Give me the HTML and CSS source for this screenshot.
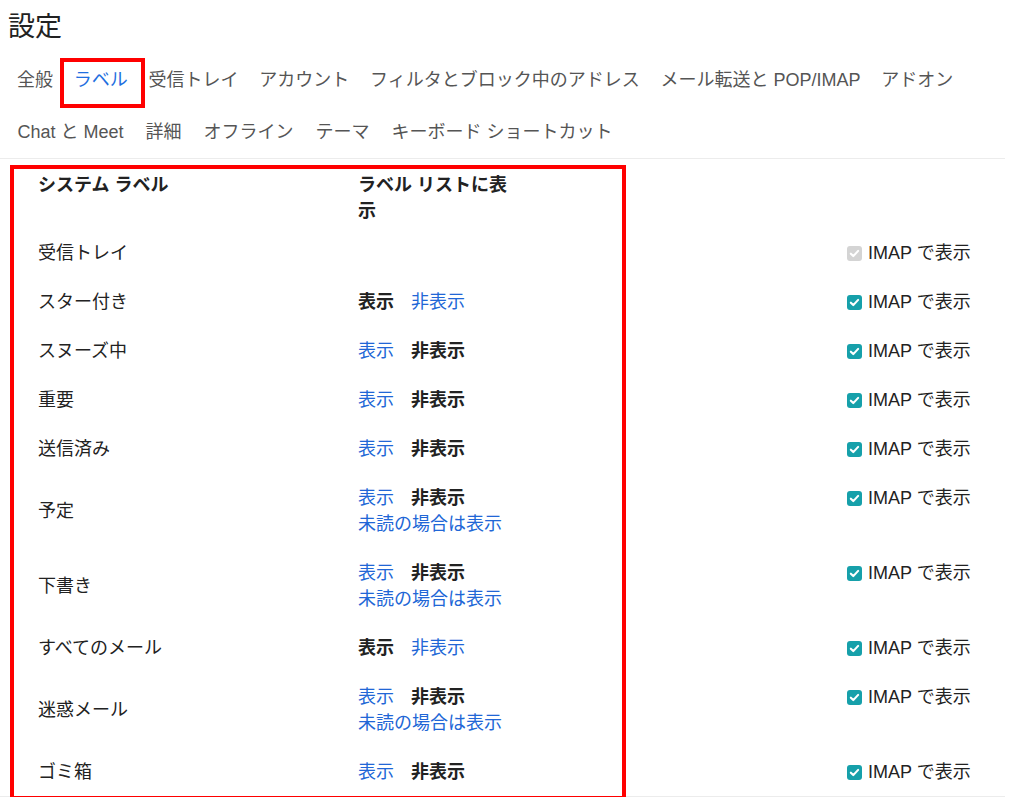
FILE: index.html
```html
<!DOCTYPE html>
<html lang="ja">
<head>
<meta charset="utf-8">
<title>設定</title>
<link rel="stylesheet" href="styles.css">
</head>
<body>
<div class="page">
  <h1 class="title">設定</h1>
  <nav class="tabs">
    <div class="tab-row">
      <span class="tab">全般</span>
      <span class="tab active">ラベル</span>
      <span class="tab">受信トレイ</span>
      <span class="tab">アカウント</span>
      <span class="tab">フィルタとブロック中のアドレス</span>
      <span class="tab">メール転送と POP/IMAP</span>
      <span class="tab">アドオン</span>
    </div>
    <div class="tab-row">
      <span class="tab">Chat と Meet</span>
      <span class="tab">詳細</span>
      <span class="tab">オフライン</span>
      <span class="tab">テーマ</span>
      <span class="tab">キーボード ショートカット</span>
    </div>
  </nav>
  <section class="labels">
    <div class="row head">
      <div class="c-name">システム ラベル</div>
      <div class="c-show">ラベル リストに表示</div>
      <div class="c-imap"></div>
    </div>

    <div class="row">
      <div class="c-name">受信トレイ</div>
      <div class="c-show"></div>
      <div class="c-imap"><span class="cb disabled"><svg viewBox="0 0 16 16"><path d="M3.5 8.2l3 3 6-6.4" /></svg></span>IMAP で表示</div>
    </div>

    <div class="row">
      <div class="c-name">スター付き</div>
      <div class="c-show"><b class="on">表示</b><a class="lnk">非表示</a></div>
      <div class="c-imap"><span class="cb"><svg viewBox="0 0 16 16"><path d="M3.5 8.2l3 3 6-6.4" /></svg></span>IMAP で表示</div>
    </div>

    <div class="row">
      <div class="c-name">スヌーズ中</div>
      <div class="c-show"><a class="lnk">表示</a><b class="on">非表示</b></div>
      <div class="c-imap"><span class="cb"><svg viewBox="0 0 16 16"><path d="M3.5 8.2l3 3 6-6.4" /></svg></span>IMAP で表示</div>
    </div>

    <div class="row">
      <div class="c-name">重要</div>
      <div class="c-show"><a class="lnk">表示</a><b class="on">非表示</b></div>
      <div class="c-imap"><span class="cb"><svg viewBox="0 0 16 16"><path d="M3.5 8.2l3 3 6-6.4" /></svg></span>IMAP で表示</div>
    </div>

    <div class="row">
      <div class="c-name">送信済み</div>
      <div class="c-show"><a class="lnk">表示</a><b class="on">非表示</b></div>
      <div class="c-imap"><span class="cb"><svg viewBox="0 0 16 16"><path d="M3.5 8.2l3 3 6-6.4" /></svg></span>IMAP で表示</div>
    </div>

    <div class="row">
      <div class="c-name">予定</div>
      <div class="c-show"><a class="lnk">表示</a><b class="on">非表示</b><br><a class="lnk">未読の場合は表示</a></div>
      <div class="c-imap"><span class="cb"><svg viewBox="0 0 16 16"><path d="M3.5 8.2l3 3 6-6.4" /></svg></span>IMAP で表示</div>
    </div>

    <div class="row">
      <div class="c-name">下書き</div>
      <div class="c-show"><a class="lnk">表示</a><b class="on">非表示</b><br><a class="lnk">未読の場合は表示</a></div>
      <div class="c-imap"><span class="cb"><svg viewBox="0 0 16 16"><path d="M3.5 8.2l3 3 6-6.4" /></svg></span>IMAP で表示</div>
    </div>

    <div class="row">
      <div class="c-name">すべてのメール</div>
      <div class="c-show"><b class="on">表示</b><a class="lnk">非表示</a></div>
      <div class="c-imap"><span class="cb"><svg viewBox="0 0 16 16"><path d="M3.5 8.2l3 3 6-6.4" /></svg></span>IMAP で表示</div>
    </div>

    <div class="row">
      <div class="c-name">迷惑メール</div>
      <div class="c-show"><a class="lnk">表示</a><b class="on">非表示</b><br><a class="lnk">未読の場合は表示</a></div>
      <div class="c-imap"><span class="cb"><svg viewBox="0 0 16 16"><path d="M3.5 8.2l3 3 6-6.4" /></svg></span>IMAP で表示</div>
    </div>

    <div class="row last">
      <div class="c-name">ゴミ箱</div>
      <div class="c-show"><a class="lnk">表示</a><b class="on">非表示</b></div>
      <div class="c-imap"><span class="cb"><svg viewBox="0 0 16 16"><path d="M3.5 8.2l3 3 6-6.4" /></svg></span>IMAP で表示</div>
    </div>

    <div class="highlight"></div>
  </section>
</div>
</body>
</html>
```

FILE: styles.css
```css
* { box-sizing: border-box; }

html, body {
  margin: 0;
  padding: 0;
  background: #ffffff;
}

body {
  font-family: "Liberation Sans", "Noto Sans CJK JP", sans-serif;
  color: #222222;
  font-size: 18px;
  overflow: hidden;
}

.page {
  width: 1005px;
}

.title {
  margin: 0;
  padding: 11px 0 0 8px;
  font-size: 27px;
  line-height: 32px;
  height: 54px;
  font-weight: normal;
  color: #222222;
}

.tabs {
  padding-left: 6.5px;
  border-bottom: 1px solid #ececec;
}

.tab-row {
  display: flex;
  height: 52px;
  align-items: center;
}

.tab {
  position: relative;
  padding: 0 10.4px;
  color: #555555;
  line-height: 26px;
  white-space: nowrap;
}

.tab-row + .tab-row .tab {
  padding: 0 11px;
}

.tab.active {
  color: #1f6fe0;
}

.tab.active::after {
  content: "";
  position: absolute;
  left: -3px;
  right: -7px;
  top: -9px;
  bottom: -15px;
  border: 4px solid #ff0000;
}

.labels {
  position: relative;
}

.row {
  display: grid;
  grid-template-columns: 320px 160px 329px 1fr;
  padding: 12px 0 11px 38px;
  line-height: 26px;
}

.row.head {
  padding-top: 13px;
  padding-bottom: 4px;
  font-weight: bold;
}

.row.last {
  border-bottom: 1px solid #ececec;
}

.c-name {
  align-self: center;
}

.row.head .c-name {
  align-self: start;
}

.c-show {
  grid-column: 2;
}

.c-imap {
  grid-column: 4;
  display: flex;
  align-items: center;
  height: 26px;
  white-space: nowrap;
  color: #222222;
}

.on {
  font-weight: bold;
  color: #222222;
  margin-right: 17px;
}

.lnk {
  color: #2166d6;
  margin-right: 17px;
  cursor: pointer;
}

.c-show .lnk:last-child,
.c-show .on:last-child {
  margin-right: 0;
}

.cb {
  width: 15px;
  height: 15px;
  border-radius: 3px;
  background: #16a0aa;
  margin-right: 6px;
  display: inline-flex;
  align-items: center;
  justify-content: center;
  flex: none;
}

.cb.disabled {
  background: #d4d4d4;
}

.cb svg {
  width: 13px;
  height: 13px;
  fill: none;
  stroke: #ffffff;
  stroke-width: 2.6;
  stroke-linecap: round;
  stroke-linejoin: round;
}

.highlight {
  position: absolute;
  left: 10px;
  top: 6px;
  width: 616px;
  height: 635px;
  border: 4px solid #ff0000;
  pointer-events: none;
}
```
